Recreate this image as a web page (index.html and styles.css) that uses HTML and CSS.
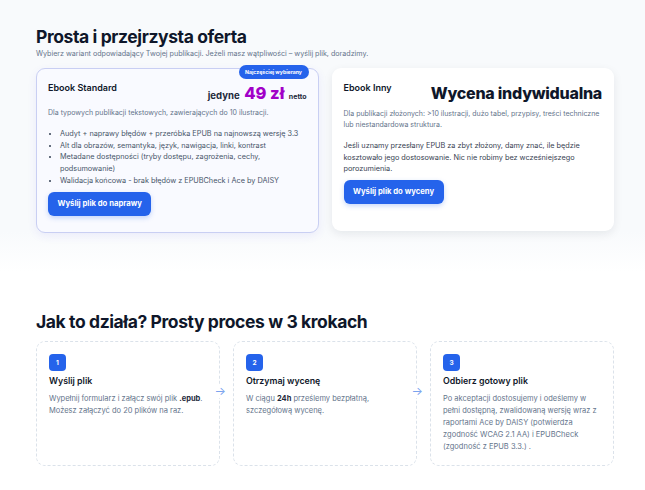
FILE: index.html
```html
<!DOCTYPE html>
<html lang="pl">
<head>
<meta charset="utf-8">
<title>Oferta</title>
<link rel="stylesheet" href="styles.css">
</head>
<body>
<section class="pricing">
  <div class="wrap">
    <h2 class="h2">Prosta i przejrzysta oferta</h2>
    <p class="lead">Wybierz wariant odpowiadający Twojej publikacji. Jeżeli masz wątpliwości – wyślij plik, doradzimy.</p>
    <div class="cards">
      <div class="card card-featured">
        <span class="badge">Najczęściej wybierany</span>
        <div class="card-head">
          <h3 class="card-title">Ebook Standard</h3>
          <div class="price"><span class="price-pre">jedyne</span> <span class="price-num">49 zł</span> <span class="price-post">netto</span></div>
        </div>
        <p class="desc">Dla typowych publikacji tekstowych, zawierających do 10 ilustracji.</p>
        <ul class="list">
          <li>Audyt + naprawy błędów + przeróbka EPUB na najnowszą wersję 3.3</li>
          <li>Alt dla obrazów, semantyka, język, nawigacja, linki, kontrast</li>
          <li>Metadane dostępności (tryby dostępu, zagrożenia, cechy, podsumowanie)</li>
          <li>Walidacja końcowa - brak błędów z EPUBCheck i Ace by DAISY</li>
        </ul>
        <a class="btn" href="#">Wyślij plik do naprawy</a>
      </div>
      <div class="card">
        <div class="card-head">
          <h3 class="card-title">Ebook Inny</h3>
          <div class="quote">Wycena indywidualna</div>
        </div>
        <p class="desc">Dla publikacji złożonych: &gt;10 ilustracji, dużo tabel, przypisy, treści techniczne lub niestandardowa struktura.</p>
        <p class="note">Jeśli uznamy przesłany EPUB za zbyt złożony, damy znać, ile będzie kosztowało jego dostosowanie. Nic nie robimy bez wcześniejszego porozumienia.</p>
        <a class="btn" href="#">Wyślij plik do wyceny</a>
      </div>
    </div>
  </div>
</section>
<section class="process">
  <div class="wrap">
    <h2 class="h2">Jak to działa? Prosty proces w 3 krokach</h2>
    <div class="steps">
      <div class="step step-arrow">
        <span class="num">1</span>
        <h4 class="step-title">Wyślij plik</h4>
        <p class="step-text">Wypełnij formularz i załącz swój plik <strong>.epub</strong>. Możesz załączyć do 20 plików na raz.</p>
      </div>
      <div class="step step-arrow">
        <span class="num">2</span>
        <h4 class="step-title">Otrzymaj wycenę</h4>
        <p class="step-text">W ciągu <strong>24h</strong> prześlemy bezpłatną,<br>szczegółową wycenę.</p>
      </div>
      <div class="step">
        <span class="num">3</span>
        <h4 class="step-title">Odbierz gotowy plik</h4>
        <p class="step-text">Po akceptacji dostosujemy i odeślemy w<br>pełni dostępną, zwalidowaną wersję wraz z<br>raportami Ace by DAISY (potwierdza<br>zgodność WCAG 2.1 AA) i EPUBCheck<br>(zgodność z EPUB 3.3.) .</p>
      </div>
    </div>
  </div>
</section>
</body>
</html>
```
FILE: styles.css
```css
* { box-sizing: border-box; }
html, body { margin: 0; padding: 0; }
body {
  font-family: Inter, "Noto Sans", "DejaVu Sans", sans-serif;
  color: #0f172a;
  background: #ffffff;
  width: 645px;
  overflow: hidden;
}
.wrap {
  width: 578px;
  margin-left: 36px;
}
.pricing {
  background: linear-gradient(#f8fafc, #f8fafc 85%, #ffffff);
  padding: 26px 0 0;
  height: 272px;
}
.h2 {
  margin: 0;
  font-size: 17.5px;
  line-height: 22px;
  font-weight: 700;
  letter-spacing: -0.4px;
  color: #0f172a;
}
.lead {
  margin: 1px 0 0;
  font-size: 7.15px;
  line-height: 10px;
  color: #64748b;
}
.cards {
  margin-top: 9px;
  display: grid;
  grid-template-columns: 1fr 1fr;
  gap: 13px;
  align-items: start;
}
.card {
  position: relative;
  background: #ffffff;
  border-radius: 9px;
  padding: 14px 12px 24px;
  box-shadow: 0 3px 10px rgba(15, 23, 42, 0.08);
  min-height: 163px;
}
.card-featured {
  background: #f9faff;
  border: 1px solid #c9cff3;
  padding: 13px 11px 14px;
  box-shadow: 0 3px 10px rgba(79, 70, 229, 0.08);
  min-height: 165px;
}
.badge {
  position: absolute;
  top: -4px;
  right: 9px;
  background: #2563eb;
  color: #fff;
  font-size: 5.2px;
  font-weight: 700;
  line-height: 14px;
  padding: 0 6.5px;
  border-radius: 8px;
}
.card-head {
  display: flex;
  justify-content: space-between;
  align-items: flex-start;
}
.card-title {
  margin: 0;
  font-size: 9px;
  line-height: 12px;
  font-weight: 600;
  color: #0f172a;
}
.price {
  margin-top: 1px;
  height: 20px;
  line-height: 20px;
  white-space: nowrap;
}
.price span { line-height: 1; }
.price-pre { font-size: 9.6px; font-weight: 700; color: #1e293b; }
.price-num { font-size: 16.5px; font-weight: 800; color: #a100c8; }
.price-post { font-size: 7px; font-weight: 700; color: #1e293b; }
.quote {
  font-size: 16px;
  font-weight: 800;
  line-height: 22px;
  letter-spacing: -0.25px;
  color: #0f172a;
}
.desc {
  margin: 4px 0 0;
  font-size: 7px;
  line-height: 11px;
  color: #64748b;
}
.list {
  margin: 10px 0 0;
  padding-left: 12px;
  font-size: 7.3px;
  line-height: 11.7px;
  color: #475569;
}
.list li::marker { color: #334155; }
.note {
  margin: 10px 0 0;
  font-size: 7.3px;
  line-height: 11.5px;
  color: #374151;
}
.btn {
  display: inline-block;
  margin-top: 5px;
  background: #2563eb;
  color: #fff;
  text-decoration: none;
  font-size: 7.7px;
  font-weight: 700;
  line-height: 24px;
  padding: 0 9.5px;
  border-radius: 6px;
  box-shadow: 0 2px 5px rgba(37, 99, 235, 0.25);
}
.card-featured .btn { margin-top: 5px; }
.process {
  padding: 39px 0 0;
}
.steps {
  margin-top: 8px;
  display: grid;
  grid-template-columns: 1fr 1fr 1fr;
  gap: 13px;
}
.step {
  position: relative;
  border: 1px dashed #dbe2ea;
  border-radius: 9px;
  padding: 12px 9px 12px 12px;
  height: 125px;
  background: #fff;
}
.step-arrow::after {
  content: "→";
  position: absolute;
  right: -7px;
  top: 42px;
  font-size: 12px;
  line-height: 14px;
  color: #7aa3ee;
  background: #fff;
}
.num {
  display: flex;
  align-items: center;
  justify-content: center;
  width: 17px;
  height: 17px;
  border-radius: 4px;
  background: #2563eb;
  color: #fff;
  font-size: 6.5px;
  font-weight: 700;
}
.step-title {
  margin: 3px 0 0;
  font-size: 8.8px;
  line-height: 14px;
  font-weight: 600;
  color: #0f172a;
}
.step-text {
  margin: 5px 0 0;
  font-size: 7.5px;
  line-height: 12px;
  color: #64748b;
}
.step-text strong { color: #1e293b; font-weight: 700; }
```
